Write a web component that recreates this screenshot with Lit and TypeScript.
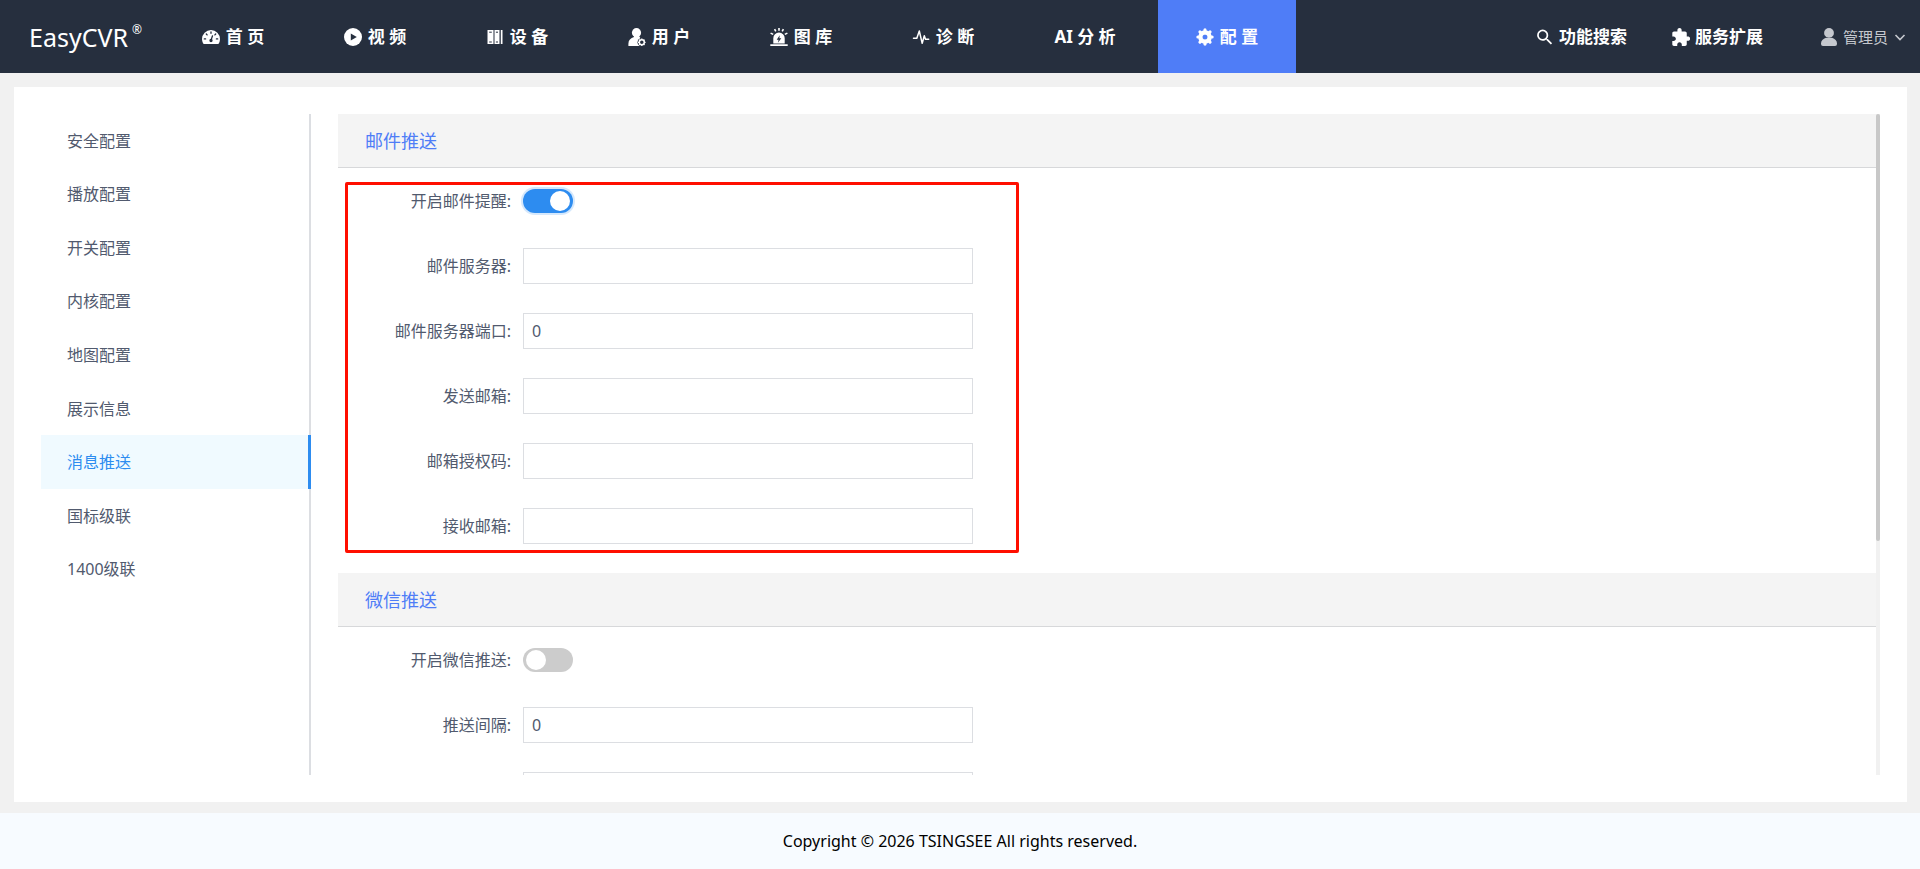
import { LitElement, html, svg, css } from "lit";
import { customElement, property, query, state } from "lit/decorators.js";
import { classMap } from "lit/directives/class-map.js";
import { styleMap } from "lit/directives/style-map.js";

const gearTeeth = [0, 45, 90, 135, 180, 225, 270, 315];

const icons: Record<string, unknown> = {
  gauge: svg`
    <path fill="currentColor" d="M9 2a9 9 0 0 1 9 9c0 1.600-.4 3-1 4.300a1.200 1.200 0 0 1-1.100.7H2.100A1.200 1.200 0 0 1 1 15.300 9.500 9.500 0 0 1 0 11a9 9 0 0 1 9-9z"/>
    <g fill="none" stroke="var(--icon-back)" stroke-width="1.300" stroke-linecap="round">
      <path d="M9 3.900v1.400M4.300 6l.8.900M13.700 6l-.8.900M2.300 10.900h1.300M14.400 10.900h1.300M9 12.400l1.500-4.600"/>
      <circle cx="9" cy="12.500" r="1" fill="var(--icon-back)"/>
    </g>`,
  play: svg`
    <circle cx="9" cy="9" r="9" fill="currentColor"/>
    <path d="M6.800 5.400v7.200l6-3.600z" fill="var(--icon-back)"/>`,
  racks: svg`
    <path fill="currentColor" d="M1.500 2h6v14h-6zM8.500 2h5v14h-5zM14.800 2h1.700v14h-1.700z"/>
    <g stroke="var(--icon-back)" stroke-width="1"><path d="M3.200 4.200h2.600M3.200 14h2.600M9.900 4.200H12M9.900 14H12"/></g>`,
  user: svg`
    <circle cx="8.500" cy="4.700" r="4.600" fill="currentColor"/>
    <path fill="currentColor" d="M6 8h5l1.500 2.200-2.200 4.600 1.300 3.200H.4v-2.300C.4 12.300 2.600 10 6 9z"/>
    <circle cx="13.800" cy="14.300" r="4.300" fill="var(--icon-back)"/>
    <circle cx="13.800" cy="14.300" r="2.500" fill="none" stroke="currentColor" stroke-width="1.500"/>
    ${gearTeeth.map((a) => svg`<path transform="rotate(${a} 13.800 14.300)" d="M13.800 10.500v1.200" stroke="currentColor" stroke-width="1.300"/>`)}`,
  siren: svg`
    <path fill="currentColor" d="M3.300 15.400V10.300a5.700 5.700 0 0 1 11.400 0v5.100zM.3 16.300h17.400V18H.3z"/>
    <path fill="none" stroke="currentColor" stroke-width="1.600" d="M9 0v2.800M4.600 1.100l1.200 2.300M13.400 1.100l-1.200 2.300M.6 5.100l2.600 1.300M17.400 5.100l-2.600 1.300"/>
    <path fill="var(--icon-back)" d="M9.700 7.300 6.700 11.700h1.900l-.7 3.100 3.400-4.500H9.400z"/>`,
  pulse: svg`<path fill="none" stroke="currentColor" stroke-width="1.500" stroke-linejoin="round" stroke-linecap="round" d="M1.500 10.300h3.300L7.300 3l2.900 12.300 2.100-7.500 1.200 3.400h3.200"/>`,
  gear: svg`
    <circle cx="9" cy="9" r="4.700" fill="none" stroke="currentColor" stroke-width="4.200"/>
    ${gearTeeth.map((a) => svg`<path transform="rotate(${a} 9 9)" d="M9 1.900v3" stroke="currentColor" stroke-width="3.200" stroke-linecap="round"/>`)}`,
  search: svg`<path fill="currentColor" transform="translate(-1.500 -1) scale(.86)" d="M15.500 14h-.79l-.28-.27A6.471 6.471 0 0 0 16 9.500 6.500 6.500 0 1 0 9.500 16c1.610 0 3.090-.59 4.230-1.570l.27.28v.79l5 4.990L20.490 19l-4.990-5zm-6 0C7.010 14 5 11.990 5 9.500S7.010 5 9.500 5 14 7.010 14 9.500 11.990 14 9.500 14z"/>`,
  puzzle: svg`<path fill="currentColor" transform="translate(-1.400 -.8) scale(.85)" d="M20.500 11H19V7c0-1.100-.9-2-2-2h-4V3.500C13 2.120 11.880 1 10.500 1S8 2.120 8 3.500V5H4c-1.100 0-1.990.9-1.990 2v3.800H3.500c1.490 0 2.700 1.210 2.700 2.700s-1.210 2.700-2.700 2.700H2V20c0 1.100.9 2 2 2h3.800v-1.500c0-1.490 1.210-2.700 2.700-2.700s2.700 1.210 2.700 2.700V22H17c1.100 0 2-.9 2-2v-4h1.500c1.380 0 2.500-1.120 2.500-2.500S21.880 11 20.500 11z"/>`,
  person: svg`
    <circle cx="9" cy="4.900" r="4.900" fill="currentColor"/>
    <path fill="currentColor" d="M6 9.800h6c3 .9 5 3 5 5.600V16a2 2 0 0 1-2 2H3a2 2 0 0 1-2-2v-.6c0-2.600 2-4.700 5-5.600z"/>`,
  chevron: svg`<path fill="none" stroke="currentColor" stroke-width="1.600" d="m4.500 7 4.500 4.500L13.500 7"/>`,
};

const icon = (name: string) =>
  html`<svg class="icon" viewBox="0 0 18 18" aria-hidden="true">${icons[name]}</svg>`;

interface NavItem {
  label: string;
  icon?: string;
}

const navItems: NavItem[] = [
  { label: "首 页", icon: "gauge" },
  { label: "视 频", icon: "play" },
  { label: "设 备", icon: "racks" },
  { label: "用 户", icon: "user" },
  { label: "图 库", icon: "siren" },
  { label: "诊 断", icon: "pulse" },
  { label: "AI 分 析" },
  { label: "配 置", icon: "gear" },
];

const menuItems = [
  "安全配置",
  "播放配置",
  "开关配置",
  "内核配置",
  "地图配置",
  "展示信息",
  "消息推送",
  "国标级联",
  "1400级联",
];

const fontStack = css`"Noto Sans", "Noto Sans CJK SC", sans-serif`;

@customElement("app-header")
export class AppHeader extends LitElement {
  @state() private current = navItems.length - 1;

  static styles = css`
    :host {
      --icon-back: #262f3e;
      display: flex;
      align-items: stretch;
      height: 73px;
      padding: 0 14px 0 29px;
      box-sizing: border-box;
      background: #262f3e;
      color: #fff;
      font-size: 17px;
    }
    .logo {
      display: flex;
      width: 135px;
      align-items: center;
      font-size: 25px;
      font-weight: 400;
      line-height: 36px;
    }
    .logo sup {
      align-self: flex-start;
      margin: 20px 0 0 4px;
      font-size: 12px;
      line-height: 20px;
    }
    nav {
      display: flex;
      gap: 4px;
    }
    a {
      color: inherit;
      text-decoration: none;
    }
    .tab,
    .tool {
      display: flex;
      align-items: center;
      gap: 5px;
      font-weight: 700;
      white-space: nowrap;
    }
    .tab {
      width: 138px;
      justify-content: center;
      gap: 6px;
    }
    .active {
      --icon-back: #4f7df7;
      background: #4f7df7;
    }
    .icon {
      flex: none;
      width: 18px;
      height: 18px;
    }
    .tools {
      display: flex;
      gap: 45px;
      margin-left: auto;
    }
    .account {
      display: flex;
      align-items: center;
      gap: 5px;
      margin-left: 12px;
      padding: 0;
      border: 0;
      background: none;
      color: #c5c8ce;
      font: inherit;
      font-size: 15px;
    }
    .chevron {
      display: flex;
      width: 13px;
      justify-content: center;
    }
  `;

  render() {
    return html`
      <div class="logo">EasyCVR<sup>®</sup></div>
      <nav>
        ${navItems.map(
          (item, i) => html`<a
            href="#"
            class=${classMap({ tab: true, active: i === this.current })}
            @click=${(e: Event) => {
              e.preventDefault();
              this.current = i;
            }}
            >${item.icon ? icon(item.icon) : ""}<span>${item.label}</span></a
          >`,
        )}
      </nav>
      <div class="tools">
        <a class="tool" href="#">${icon("search")}<span>功能搜索</span></a>
        <a class="tool" href="#">${icon("puzzle")}<span>服务扩展</span></a>
        <button class="account" type="button">
          ${icon("person")}<span>管理员</span><span class="chevron">${icon("chevron")}</span>
        </button>
      </div>
    `;
  }
}

@customElement("side-menu")
export class SideMenu extends LitElement {
  @state() private current = 6;

  static styles = css`
    :host {
      display: block;
      width: 270px;
      flex: none;
      box-shadow: inset -2px 0 #dcdee2;
    }
    nav {
      display: flex;
      flex-direction: column;
      height: 482px;
    }
    a {
      display: flex;
      flex: 1;
      align-items: center;
      padding: 0 26px;
      color: #515a6e;
      text-decoration: none;
    }
    .active {
      border-right: 3px solid #2d8cf0;
      background: #f0faff;
      color: #2d8cf0;
    }
  `;

  render() {
    return html`<nav>
      ${menuItems.map(
        (label, i) => html`<a
          href="#"
          class=${classMap({ active: i === this.current })}
          @click=${(e: Event) => {
            e.preventDefault();
            this.current = i;
          }}
          >${label}</a
        >`,
      )}
    </nav>`;
  }
}

interface Field {
  id: string;
  label?: string;
  type: "switch" | "text";
  value?: string;
  on?: boolean;
}

@customElement("config-section")
export class ConfigSection extends LitElement {
  @property() heading = "";
  @property({ attribute: false }) fields: Field[] = [];
  @property({ type: Boolean }) marked = false;

  static styles = css`
    :host {
      display: block;
      margin-bottom: 29px;
    }
    h2 {
      margin: 0;
      padding: 0 27px;
      background: #f4f4f4;
      box-shadow: inset 0 -1px #d7d8da;
      color: #4f7df7;
      font-size: 18px;
      font-weight: 400;
      line-height: 54px;
    }
    form {
      position: relative;
      display: grid;
      gap: 29px;
      padding-top: 15px;
    }
    .row {
      display: grid;
      grid-template-columns: 173px minmax(0, 450px);
      column-gap: 12px;
      align-items: center;
      height: 36px;
    }
    label {
      text-align: right;
      white-space: nowrap;
    }
    input {
      grid-column: 2;
    }
    .text {
      box-sizing: border-box;
      width: 100%;
      height: 36px;
      margin: 0;
      padding: 0 8px;
      border: 1px solid #dcdee2;
      border-radius: 0;
      background: #fff;
      color: #515a6e;
      font: inherit;
      outline: none;
    }
    .switch {
      appearance: none;
      display: flex;
      align-items: center;
      box-sizing: border-box;
      width: 50px;
      height: 24px;
      margin: 0;
      padding: 0 3px;
      border-radius: 12px;
      background: #ccc;
      outline: none;
    }
    .switch::before {
      content: "";
      width: 20px;
      height: 20px;
      border-radius: 50%;
      background: #fff;
    }
    .switch:checked {
      justify-content: flex-end;
      background: #2d8cf0;
      box-shadow: 0 0 0 2px rgba(45, 140, 240, 0.2);
    }
    .mark {
      position: absolute;
      inset: 14px auto -9px 7px;
      width: 674px;
      box-sizing: border-box;
      border: 3px solid #ff0f00;
      border-radius: 2px;
      pointer-events: none;
    }
  `;

  render() {
    return html`
      <h2>${this.heading}</h2>
      <form @submit=${(e: Event) => e.preventDefault()}>
        ${this.fields.map(
          (f) => html`<div class="row">
            ${f.label ? html`<label for=${f.id}>${f.label}:</label>` : ""}
            ${f.type === "switch"
              ? html`<input class="switch" type="checkbox" id=${f.id} .checked=${!!f.on} />`
              : html`<input class="text" type="text" id=${f.id} .value=${f.value ?? ""} />`}
          </div>`,
        )}
        ${this.marked ? html`<div class="mark"></div>` : ""}
      </form>
    `;
  }
}

const mailFields: Field[] = [
  { id: "mail-on", label: "开启邮件提醒", type: "switch", on: true },
  { id: "mail-host", label: "邮件服务器", type: "text" },
  { id: "mail-port", label: "邮件服务器端口", type: "text", value: "0" },
  { id: "mail-from", label: "发送邮箱", type: "text" },
  { id: "mail-code", label: "邮箱授权码", type: "text" },
  { id: "mail-to", label: "接收邮箱", type: "text" },
];

const wechatFields: Field[] = [
  { id: "wx-on", label: "开启微信推送", type: "switch" },
  { id: "wx-gap", label: "推送间隔", type: "text", value: "0" },
  { id: "wx-extra", type: "text" },
];

/** Scrolling pane with a slim rail whose thumb follows the content. */
@customElement("scroll-pane")
export class ScrollPane extends LitElement {
  @query(".view") private view!: HTMLElement;
  @state() private size = 100;
  @state() private offset = 0;

  private observer = new ResizeObserver(() => this.measure());

  static styles = css`
    :host {
      display: flex;
      min-width: 0;
      min-height: 0;
    }
    .view {
      flex: 1;
      min-width: 0;
      overflow-y: auto;
      scrollbar-width: none;
    }
    .rail {
      flex: none;
      width: 4px;
      background: #f1f1f1;
    }
    .thumb {
      border-radius: 2px;
      background: #c8c8c8;
    }
  `;

  firstUpdated() {
    this.observer.observe(this.view);
    this.observer.observe(this.view.firstElementChild as HTMLElement);
  }

  disconnectedCallback() {
    super.disconnectedCallback();
    this.observer.disconnect();
  }

  private measure() {
    const { clientHeight, scrollHeight, scrollTop } = this.view;
    this.size = (clientHeight / scrollHeight) * 100;
    this.offset = (scrollTop / clientHeight) * 100;
  }

  render() {
    return html`
      <div class="view" @scroll=${() => this.measure()}>
        <div><slot></slot></div>
      </div>
      <div class="rail">
        <div
          class="thumb"
          style=${styleMap({ height: `${this.size}%`, transform: `translateY(${this.offset}%)` })}
        ></div>
      </div>
    `;
  }
}

@customElement("app-root")
export class AppRoot extends LitElement {
  static styles = css`
    :host {
      display: flex;
      flex-direction: column;
      height: 100vh;
      background: #f1f1f1;
      color: #515a6e;
      font-family: ${fontStack};
      font-size: 16px;
      line-height: 26px;
    }
    app-header {
      flex: none;
    }
    main {
      display: flex;
      flex: 1;
      gap: 27px;
      min-height: 0;
      margin: 14px 13px 11px 14px;
      padding: 27px;
      box-sizing: border-box;
      background: #fff;
    }
    scroll-pane {
      flex: 1;
    }
    .body {
      padding-bottom: 300px;
    }
    footer {
      flex: none;
      background: #f7fbff;
      color: #000;
      text-align: center;
      line-height: 56px;
    }
  `;

  render() {
    return html`
      <app-header></app-header>
      <main>
        <side-menu></side-menu>
        <scroll-pane>
          <div class="body">
            <config-section heading="邮件推送" .fields=${mailFields} marked></config-section>
            <config-section heading="微信推送" .fields=${wechatFields}></config-section>
          </div>
        </scroll-pane>
      </main>
      <footer>Copyright © 2026 TSINGSEE All rights reserved.</footer>
    `;
  }
}
